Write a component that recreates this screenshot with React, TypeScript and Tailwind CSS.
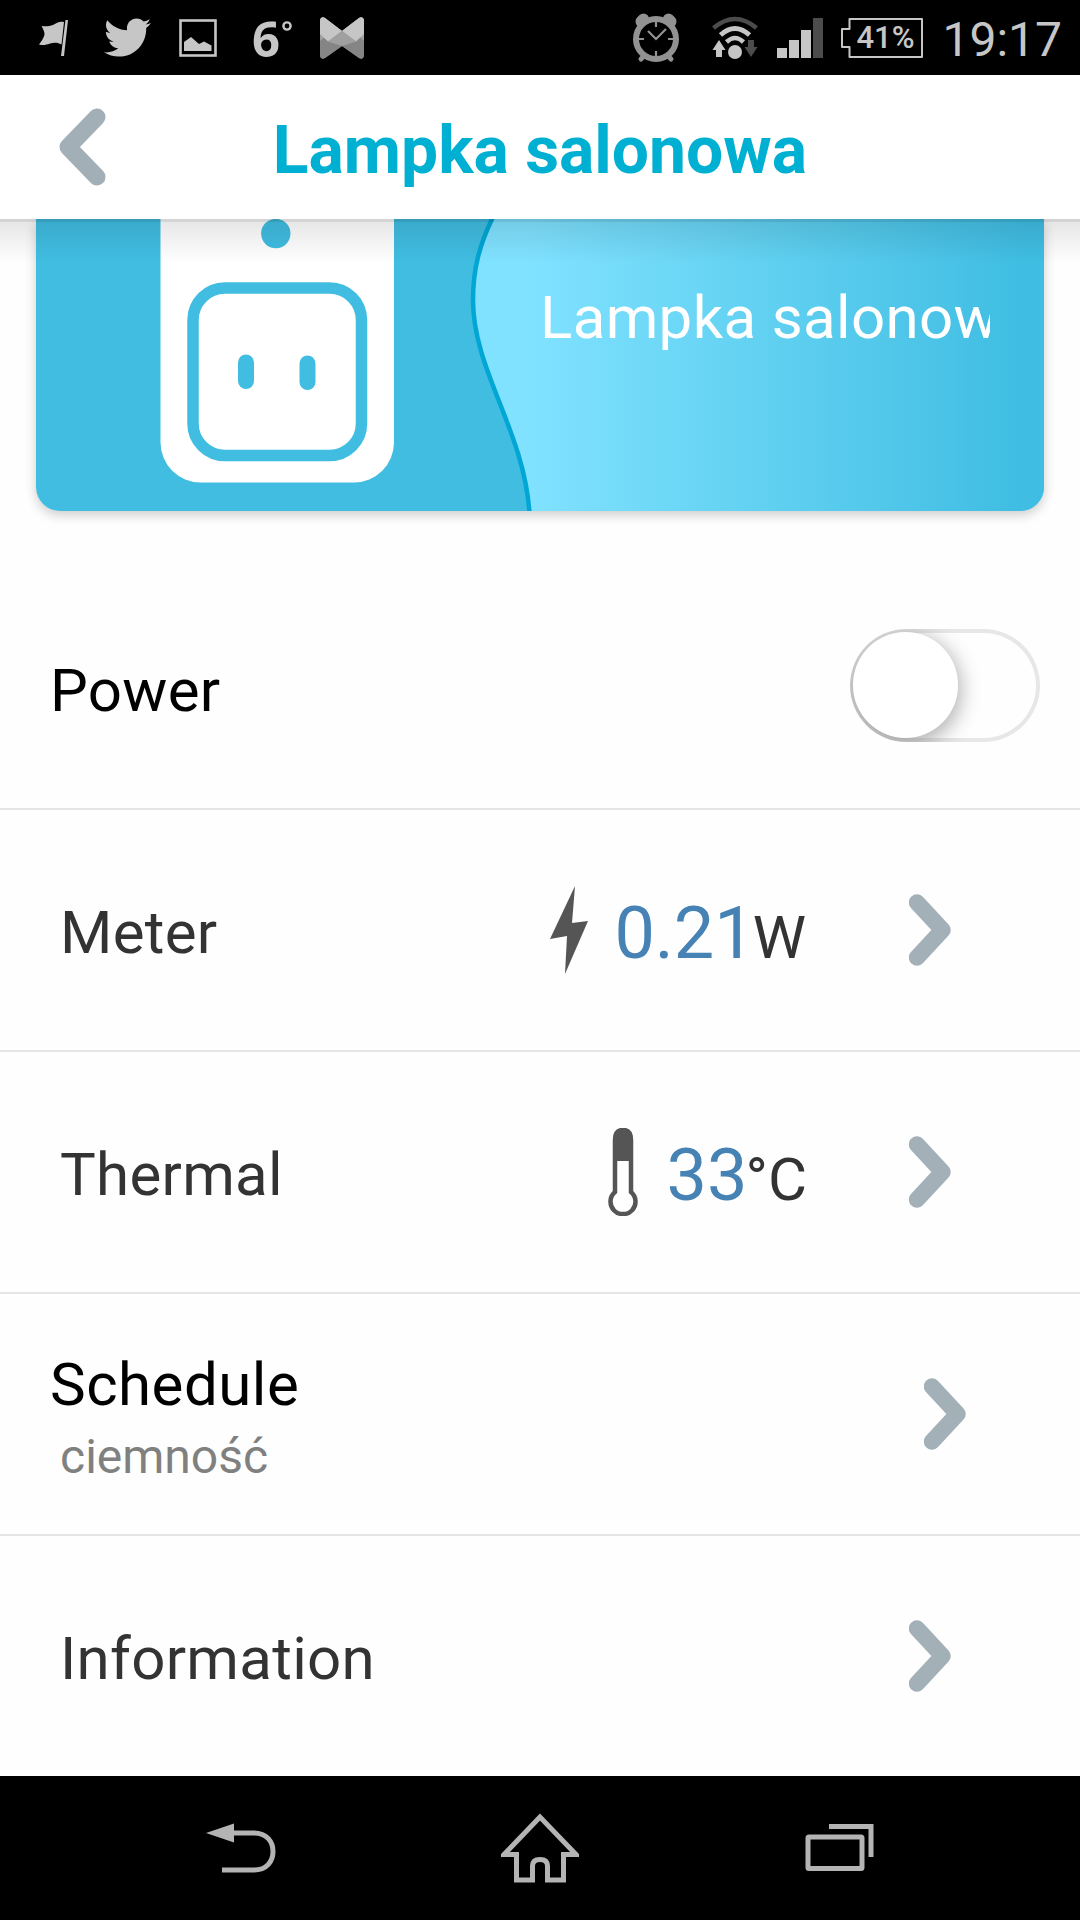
import type { ReactNode } from "react";
import { FaTwitter } from "react-icons/fa";

function StatusBar() {
  return (
    <div className="flex h-[75px] items-center justify-between bg-black pl-[39px] pr-[18px] text-[#c6c6c6]">
      <div className="flex items-center">
        <svg width="30" height="38" viewBox="0 0 30 38" fill="currentColor">
          <path d="M26.5 1h2.5l-4 36h-3z" />
          <path d="M25 3c-5-1-7 1-11 3-4 1.5-8 1.5-11.5 1 2 3.5 3 6 3 8.500C5 19 2 22.500 0 25.500c4 1 7 .5 11-1 4.500-1.500 8-1 11.500 1z" />
        </svg>
        <FaTwitter className="ml-[35px] h-[47px] w-[47px]" />
        <svg className="ml-[28px]" width="38" height="38" viewBox="0 0 38 38" fill="none">
          <rect x="1.5" y="1.5" width="35" height="35" stroke="currentColor" strokeWidth="2.6" />
          <path d="M5 32V23l7-5 8 7 5-2.5 7.5 4V32z" fill="currentColor" />
        </svg>
        <div className="ml-[35px] mt-0.5 flex">
          <span className="font-['Open_Sans'] text-[49px] font-bold leading-none tracking-tight">6</span>
          <svg className="ml-0.5 mt-1.5" width="12" height="12" viewBox="0 0 12 12" fill="none">
            <circle cx="6" cy="6" r="3.6" stroke="currentColor" strokeWidth="2.4" />
          </svg>
        </div>
        <svg className="ml-[27px]" width="44" height="42" viewBox="0 0 44 42">
          <path d="M0 3Q1-1 5 1L22 14 39 1q4-2 5 2v36q-1 4-5 2L22 29 5 41q-4 2-5-2z" fill="#858585" />
          <path d="M0 3Q1-1 5 1L22 14 39 1q4-2 5 2v26l-8-5-14-10-14 10-8 5z" fill="#a0a0a0" />
          <path d="M0 30V24l8-7 14 12L5 41q-4 2-5-2zM44 30V24l-8-7-14 12 17 12q4 2 5-2z" fill="#858585" />
          <path d="M0 3Q1-1 5 1L22 14l-14 10.500L0 17zM44 3Q43-1 39 1L22 14l14 10.500 8-7.500z" fill="#c6c6c6" />
          <path d="M22 14l14 10.500L22 29 8 24.500z" fill="#a0a0a0" />
        </svg>
      </div>

      <div className="flex items-center">
        <svg className="text-[#929292]" width="46" height="50" viewBox="0 0 46 50" fill="none" stroke="currentColor">
          <path d="M10.500 6L8 8.500M35.500 6L38 8.500" strokeWidth="11" strokeLinecap="round" />
          <circle cx="23" cy="26" r="20" strokeWidth="6" fill="#000" />
          <path d="M11 43l-3 3M35 43l3 3" strokeWidth="5" strokeLinecap="round" />
          <path d="M23 9v5M23 38v5M6 26h5M35 26h5M15 18l8 8 10-10" strokeWidth="2.2" />
        </svg>
        <svg className="ml-[33px]" width="46" height="44" viewBox="0 0 46 44" fill="none">
          <path d="M1.5 12Q23-6 44.5 12" stroke="#4c4c4c" strokeWidth="4.5" />
          <path d="M8.5 19Q23 6 37.5 19" stroke="currentColor" strokeWidth="5" />
          <path d="M14.5 26Q23 18 31.5 26" stroke="currentColor" strokeWidth="4.5" />
          <circle cx="23" cy="36" r="7" fill="currentColor" />
          <path d="M7 24l6.500 10H10v7H4v-7H.5z" fill="currentColor" />
          <path d="M39 41l-6.500-10H36v-7h6v7h3.500z" fill="#4c4c4c" />
        </svg>
        <div className="ml-[19px] flex h-10 items-end gap-0.5">
          <div className="h-2.5 w-2.5 bg-current" />
          <div className="h-[18px] w-2.5 bg-current" />
          <div className="h-7 w-2.5 bg-current" />
          <div className="h-10 w-2.5 bg-[#4c4c4c]" />
        </div>
        <div className="relative ml-[18px] flex h-10 w-[82px] items-center justify-center">
          <svg className="absolute inset-0" width="82" height="40" viewBox="0 0 82 40" fill="none">
            <path d="M8.5 1H81v38H8.5V29H1V11h7.500z" stroke="currentColor" strokeWidth="2" strokeLinejoin="round" />
          </svg>
          <span className="pl-1.5 font-['Roboto'] text-[31px] font-medium leading-none">41%</span>
        </div>
        <span className="ml-[19px] mt-[5px] font-['Roboto'] text-[48px] leading-none">19:17</span>
      </div>
    </div>
  );
}

function Header() {
  return (
    <header className="relative z-10 grid h-[144px] grid-cols-[1fr_auto_1fr] items-center bg-white">
      <svg className="ml-[59px]" width="47" height="78" viewBox="0 0 47 78" fill="none">
        <path d="M38 9L9 39l29 30" stroke="#a3afb7" strokeWidth="17" strokeLinecap="round" strokeLinejoin="round" />
      </svg>
      <h1 className="pt-[7px] font-['Roboto'] text-[66px] font-bold leading-none text-[#00b0d2]">Lampka salonowa</h1>
      <div className="absolute left-0 top-full h-[3px] w-full bg-black/8" />
      <div className="absolute left-0 top-full h-11 w-full bg-linear-to-b from-black/10 to-transparent" />
    </header>
  );
}

function DeviceCard() {
  return (
    <section className="h-[349px] px-9">
      <div className="relative h-[292px] rounded-b-[24px] shadow-[0_4px_12px_rgba(0,0,0,0.2)]">
        <svg className="rounded-b-[24px]" width="1008" height="292" viewBox="36 219 1008 292">
          <defs>
            <linearGradient id="sky" gradientUnits="userSpaceOnUse" x1="530" x2="1025" y1="0" y2="0">
              <stop offset="0" stopColor="#80e2ff" />
              <stop offset="1" stopColor="#3fbde2" />
            </linearGradient>
          </defs>
          <rect x="36" y="219" width="1008" height="292" fill="#40bde1" />
          <path d="M493 219C479 245 473 270 473 300C473 370 525 430 530 511H1044V219z" fill="url(#sky)" />
          <path d="M494 215C479 245 473 270 473 300C473 370 524 430 529.5 513" fill="none" stroke="#00a6d4" strokeWidth="4.5" />
          <rect x="160.5" y="100" width="233.5" height="382.5" rx="40" fill="#fff" />
          <circle cx="275.800" cy="233.5" r="14.7" fill="#40bde1" />
          <rect x="193" y="288" width="168.5" height="167.5" rx="32" fill="#fff" stroke="#40bde1" strokeWidth="11.5" />
          <rect x="238" y="354.5" width="16" height="34.5" rx="8" fill="#40bde1" />
          <rect x="299.5" y="355.5" width="16" height="34.5" rx="8" fill="#40bde1" />
        </svg>
        <div className="absolute left-[504px] top-[63px] w-[450px] overflow-hidden whitespace-nowrap font-['Roboto'] text-[60px] leading-[72px] tracking-[0.35px] text-white">
          Lampka salonowa
        </div>
      </div>
    </section>
  );
}

function Chevron({ className }: { className: string }) {
  return (
    <svg className={className} width="42" height="72" viewBox="0 0 42 72" fill="none">
      <path d="M8 8.5L33.500 36 8 63.5" stroke="#a3b0b8" strokeWidth="16.5" strokeLinecap="round" strokeLinejoin="round" />
    </svg>
  );
}

function Row({ children }: { children: ReactNode }) {
  return <div className="flex h-[242px] items-center border-b-2 border-[#e5e5e5]">{children}</div>;
}

function Label({ children }: { children: ReactNode }) {
  return (
    <span className="ml-[60px] mr-auto pt-1.5 text-[60px] leading-[72px] tracking-[0.3px] text-[#333]">{children}</span>
  );
}

function Value({ value, unit }: { value: string; unit: string }) {
  return (
    <div className="flex items-baseline pt-3 leading-[72px]">
      <span className="text-[72px] text-[#4682b4]">{value}</span>
      <span className="-ml-0.5 text-[60px] text-[#333]">{unit}</span>
    </div>
  );
}

function NavBar() {
  return (
    <nav className="flex h-36 items-center justify-between bg-black px-[206px] text-[#b4b4b4]">
      <svg width="70" height="70" viewBox="0 0 70 70" fill="none">
        <path d="M0 20l28-9.500v19z" fill="currentColor" />
        <path d="M26 20h22C61 20 67 29 67 38.500S61 57 48 57H16" stroke="currentColor" strokeWidth="5" />
      </svg>
      <svg width="78" height="70" viewBox="0 0 78 70" fill="none">
        <path
          d="M39 4L3 41.5H15.5V67H31.5V53Q31.5 46.500 39 46.500T46.5 53V67H62.5V41.5H75z"
          stroke="currentColor"
          strokeWidth="5"
        />
      </svg>
      <svg width="70" height="70" viewBox="0 0 70 70" fill="none" stroke="currentColor">
        <rect x="4" y="24" width="54" height="31.5" rx="1" strokeWidth="5" />
        <path d="M25 13.5H67V44" strokeWidth="5" />
      </svg>
    </nav>
  );
}

export default function App() {
  return (
    <div className="h-[1920px] w-[1080px] overflow-hidden bg-[#fefefe] font-['Roboto',sans-serif]">
      <StatusBar />
      <Header />
      <DeviceCard />

      <Row>
        <span className="ml-[50px] mr-auto pt-1.5 text-[60px] leading-[72px] tracking-[0.3px] text-black">Power</span>
        <div className="relative mb-1.5 mr-10 h-[113px] w-[190px] overflow-hidden rounded-full bg-[#e7e7e7]">
          <div className="absolute inset-1 rounded-full bg-[#fefefe]" />
          <div className="absolute left-[3px] top-[3px] h-[106px] w-[105px] rounded-full bg-white shadow-[0_5px_20px_3px_rgba(0,0,0,0.3)]" />
        </div>
      </Row>

      <Row>
        <Label>Meter</Label>
        <svg className="mr-[26px]" width="38" height="88" viewBox="0 0 38 88" fill="#555">
          <path d="M25 0L0 53l17-3-2 38 23-53-16 2z" />
        </svg>
        <Value value="0.21" unit="W" />
        <Chevron className="ml-[103px] mr-[129px]" />
      </Row>

      <Row>
        <Label>Thermal</Label>
        <svg className="mr-[29px]" width="30" height="88" viewBox="0 0 30 88" fill="none">
          <path d="M7 12Q7 2 15 2T23 12V64A12.5 12.5 0 1 1 7 64z" stroke="#555" strokeWidth="4.5" fill="#fff" />
          <path d="M5 12Q6 0 15 0T25 12V33H5z" fill="#555" />
        </svg>
        <Value value="33" unit="°C" />
        <Chevron className="ml-[102px] mr-[129px]" />
      </Row>

      <Row>
        <div className="mr-auto flex flex-col pt-[13px] leading-[72px]">
          <span className="ml-[50px] text-[60px] tracking-[0.5px] text-black">Schedule</span>
          <span className="ml-[60px] text-[48px] leading-[72px] text-[#808080]">ciemność</span>
        </div>
        <Chevron className="mr-[114px]" />
      </Row>

      <div className="flex h-[240px] items-center">
        <Label>Information</Label>
        <Chevron className="mr-[129px]" />
      </div>

      <NavBar />
    </div>
  );
}
